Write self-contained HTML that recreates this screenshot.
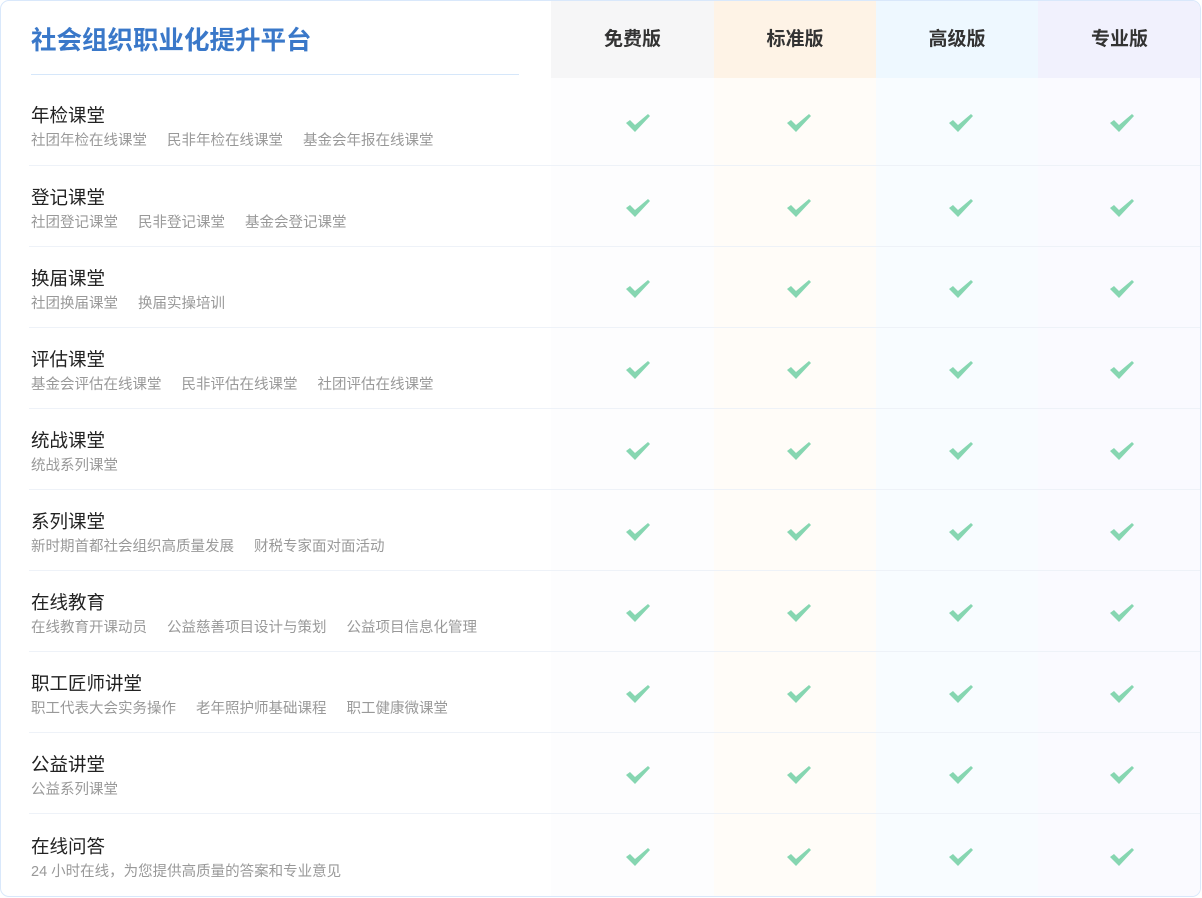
<!DOCTYPE html>
<html><head><meta charset="utf-8"><style>
*{margin:0;padding:0;box-sizing:border-box}
body{width:1202px;height:898px;background:#fff;font-family:"Liberation Sans","Noto Sans CJK SC",sans-serif;overflow:hidden}
.wrap{position:absolute;left:0;top:0;width:1201px;height:897px;border:1px solid #d9e8fb;border-radius:9px;overflow:hidden;background:#fff}
.col{position:absolute;top:0;height:897px}
.hd{position:absolute;top:0;height:77px;width:100%;font-size:19px;font-weight:bold;color:#333;text-align:center;line-height:77px}
.title{position:absolute;left:30px;top:19px;font-size:25.5px;font-weight:bold;color:#3a78c9;letter-spacing:0}
.tline{position:absolute;left:30px;top:73px;width:488px;height:1px;background:#d6e7fa}
.row{position:absolute;left:28px;width:1172px;border-bottom:1px solid #eef2f8}
.row .t{position:absolute;left:2px;font-size:18.5px;color:#222;white-space:nowrap}
.row .s{position:absolute;left:2px;font-size:14.5px;color:#999;white-space:nowrap}
.row .s span{margin-right:20px}
.ck{position:absolute;width:26px;height:20px}
</style></head><body><div class="wrap">
<div class="col" style="left:550px;width:163px;background:#fdfdfe"><div class="hd" style="background:#f6f6f7">免费版</div></div>
<div class="col" style="left:713px;width:162px;background:#fffcf8"><div class="hd" style="background:#fef3e6">标准版</div></div>
<div class="col" style="left:875px;width:162px;background:#f8fcff"><div class="hd" style="background:#eef8ff">高级版</div></div>
<div class="col" style="left:1037px;width:163px;background:#fafaff"><div class="hd" style="background:#f1f1fd">专业版</div></div>
<div class="title">社会组织职业化提升平台</div>
<div class="tline"></div>
<div id="rows"></div>
</div>
<script>
var d=[["年检课堂",["社团年检在线课堂","民非年检在线课堂","基金会年报在线课堂"]],
["登记课堂",["社团登记课堂","民非登记课堂","基金会登记课堂"]],
["换届课堂",["社团换届课堂","换届实操培训"]],
["评估课堂",["基金会评估在线课堂","民非评估在线课堂","社团评估在线课堂"]],
["统战课堂",["统战系列课堂"]],
["系列课堂",["新时期首都社会组织高质量发展","财税专家面对面活动"]],
["在线教育",["在线教育开课动员","公益慈善项目设计与策划","公益项目信息化管理"]],
["职工匠师讲堂",["职工代表大会实务操作","老年照护师基础课程","职工健康微课堂"]],
["公益讲堂",["公益系列课堂"]],
["在线问答",["24 小时在线，为您提供高质量的答案和专业意见"]]];
var h="",y0=77;
var cx=[637,798,960,1121];
for(var i=0;i<d.length;i++){var H=i==0?88:81;if(i==9)H=83;var c=y0+H/2;var o=i==0?0:-3;
h+='<div class="row" style="top:'+y0+'px;height:'+H+'px"><div class="t" style="top:'+(c-20+o-y0)+'px">'+d[i][0]+'</div><div class="s" style="top:'+(c+7+o-y0)+'px">'+d[i][1].map(function(x){return '<span>'+x+'</span>'}).join('')+'</div></div>';
for(var j=0;j<4;j++)h+='<svg class="ck" style="left:'+(cx[j]-13)+'px;top:'+(c-9)+'px" viewBox="0 0 26 20"><path d="M1 10 L5 7 L10 12 L23 1 L25 3 L10 19 Z" fill="#86d6b1"/></svg>';
y0+=H;}
document.getElementById('rows').outerHTML=h;
</script>
</body></html>
